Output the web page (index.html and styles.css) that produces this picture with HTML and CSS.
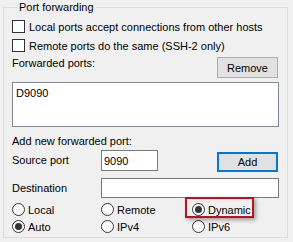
FILE: index.html
```html
<!DOCTYPE html>
<html lang="en">

<head>
    <meta charset="UTF-8">
    <meta name="viewport" content="width=device-width, initial-scale=1.0">
    <title>Port forwarding</title>
    <link rel="stylesheet" href="styles.css">
</head>

<body>
    <fieldset class="group">
        <legend>Port forwarding</legend>

        <label class="check"><span class="box"></span>Local ports accept connections from other hosts</label>
        <label class="check"><span class="box"></span>Remote ports do the same (SSH-2 only)</label>

        <div class="row fwd">
            <span>Forwarded ports:</span>
            <button class="btn">Remove</button>
        </div>

        <div class="listbox">D9090</div>

        <div class="caption">Add new forwarded port:</div>

        <div class="row src">
            <span class="lbl">Source port</span>
            <input class="field short" type="text" value="9090">
            <button class="btn default">Add</button>
        </div>

        <div class="row dest">
            <span class="lbl">Destination</span>
            <input class="field long" type="text" value="">
        </div>

        <div class="radios">
            <label class="radio"><span class="dot"></span>Local</label>
            <label class="radio"><span class="dot"></span>Remote</label>
            <label class="radio highlight"><span class="dot on"></span>Dynamic</label>
            <label class="radio"><span class="dot on"></span>Auto</label>
            <label class="radio"><span class="dot"></span>IPv4</label>
            <label class="radio"><span class="dot"></span>IPv6</label>
        </div>
    </fieldset>
</body>

</html>
```

FILE: styles.css
```css
body {
    margin: 0;
    background-color: #f0f0f0;
    font-family: "Liberation Sans", Arial, sans-serif;
    font-size: 11px;
    line-height: 14px;
    color: #000;
    white-space: nowrap;
}

.group {
    box-sizing: border-box;
    width: 284px;
    margin: 0 0 0 3px;
    padding: 0 8px 2px 8px;
    border: 1px solid #dcdcdc;
}

.group legend {
    padding: 0 2px;
    margin-left: 5px;
}

.check {
    display: flex;
    align-items: center;
    gap: 4px;
    height: 19px;
}

.check:first-of-type {
    margin-top: 3px;
}

.box {
    box-sizing: border-box;
    width: 13px;
    height: 13px;
    border: 1px solid #333;
    background-color: #fff;
}

.row {
    display: flex;
}

.fwd {
    margin-top: 2px;
    justify-content: space-between;
    align-items: flex-start;
    padding-right: 1px;
}

.fwd span {
    margin-top: -1px;
}

.btn {
    box-sizing: border-box;
    width: 61px;
    height: 21px;
    padding: 0;
    font-family: inherit;
    font-size: 11px;
    color: #000;
    background-color: #e1e1e1;
    border: 1px solid #adadad;
    border-radius: 0;
}

.btn.default {
    height: 20px;
    margin-top: 2px;
    margin-left: auto;
    margin-right: 1px;
    border: 2px solid #0078d7;
}

.listbox {
    box-sizing: border-box;
    height: 45px;
    margin-top: 4px;
    padding: 3px 3px;
    background-color: #fff;
    border: 1px solid #828790;
}

.caption {
    margin-top: 7px;
}

.src {
    margin-top: 2px;
    height: 22px;
}

.src .lbl {
    margin-top: 3px;
}

.lbl {
    width: 89px;
}

.field {
    box-sizing: border-box;
    height: 21px;
    padding: 0 2px;
    font-family: inherit;
    font-size: 11px;
    color: #000;
    background-color: #fff;
    border: 1px solid #7a7a7a;
    outline: none;
}

.field.short {
    width: 57px;
}

.dest {
    margin-top: 6px;
    align-items: center;
}

.field.long {
    width: 178px;
    height: 20px;
}

.radios {
    display: grid;
    grid-template-columns: 89px 91px 1fr;
    grid-auto-rows: 17px;
    margin-top: 3px;
}

.radio {
    display: flex;
    align-items: center;
    gap: 3px;
}

.dot {
    box-sizing: border-box;
    width: 13px;
    height: 13px;
    border: 1px solid #333;
    border-radius: 50%;
    background-color: #fff;
    display: flex;
    align-items: center;
    justify-content: center;
}

.dot.on::after {
    content: "";
    width: 7px;
    height: 7px;
    border-radius: 50%;
    background-color: #333;
}

.highlight {
    position: relative;
}

.highlight::before {
    content: "";
    position: absolute;
    left: -7px;
    top: -4px;
    width: 69px;
    height: 21px;
    box-sizing: border-box;
    border: 2px solid #b8141c;
    box-shadow: 2px 2px 4px rgba(0, 0, 0, 0.35);
}
```
